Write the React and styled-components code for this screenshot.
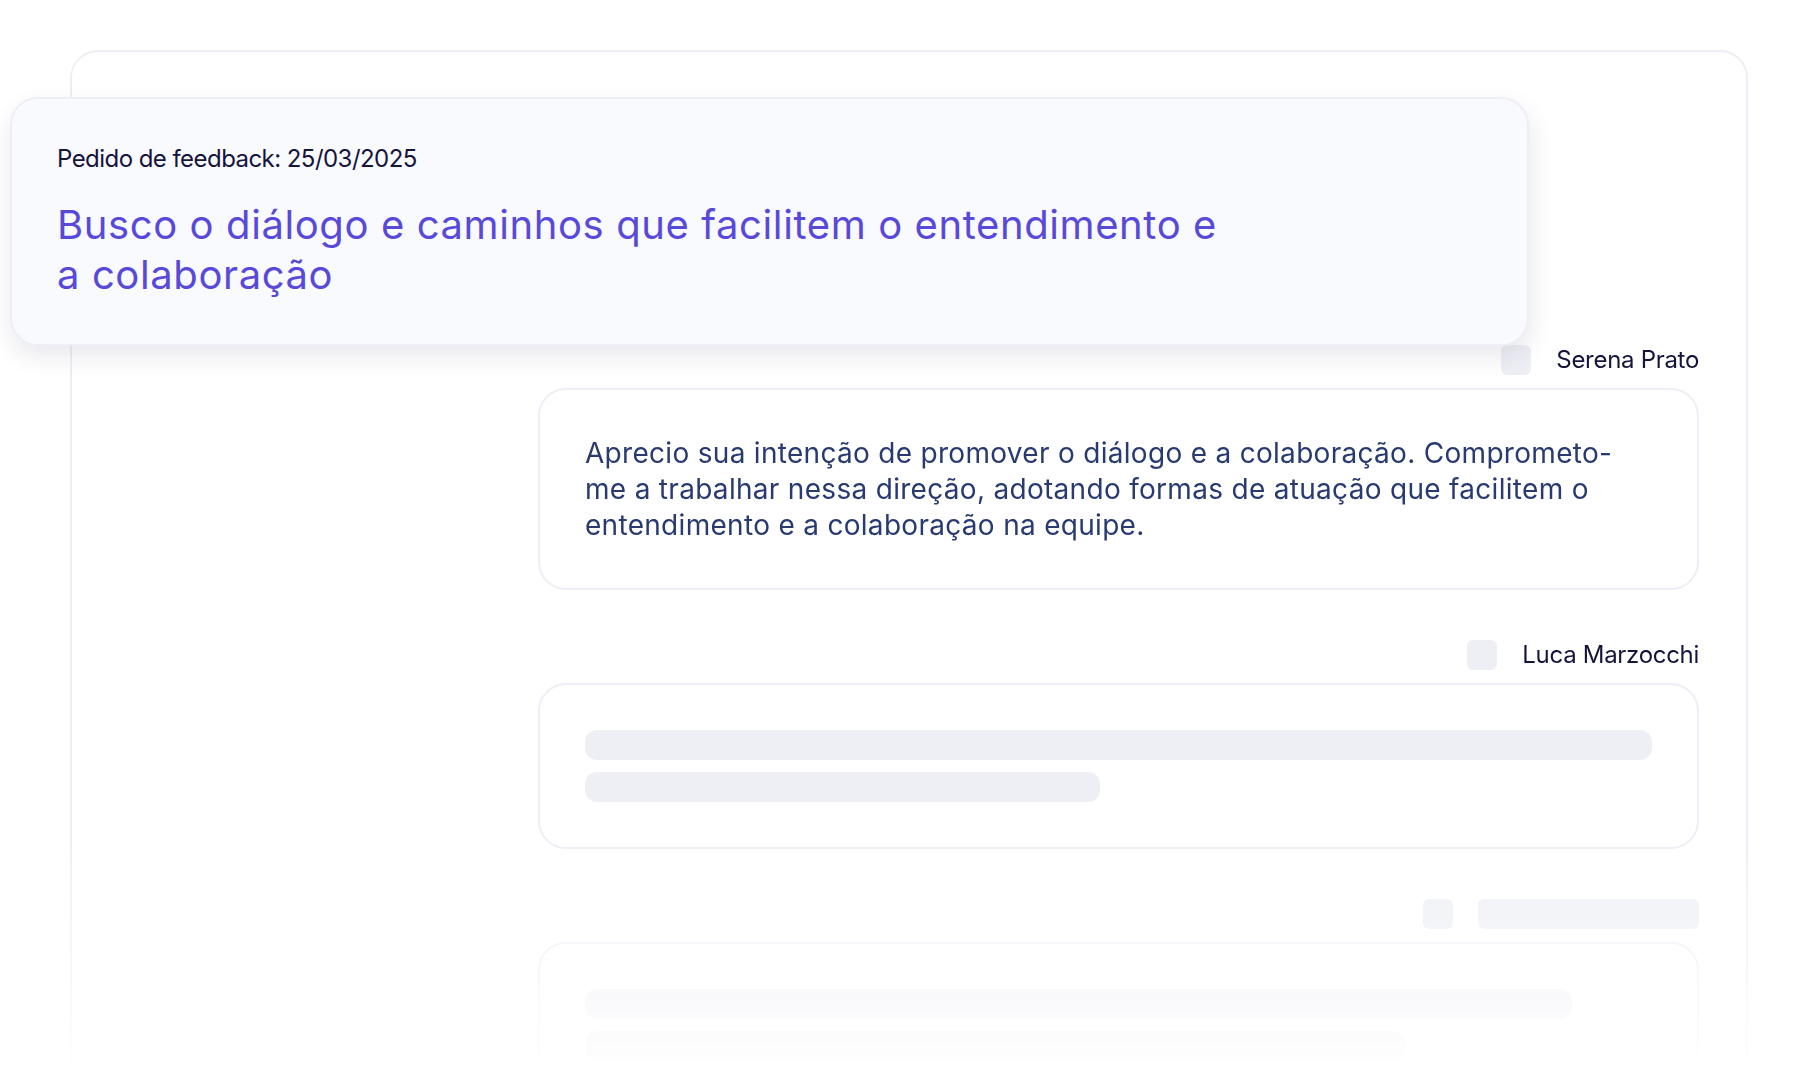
import React from "react";
import styled, { createGlobalStyle } from "styled-components";

const GlobalStyle = createGlobalStyle`
  html, body {
    margin: 0;
    padding: 0;
    background: #ffffff;
  }
  body {
    font-family: Inter, "Noto Sans", "Liberation Sans", sans-serif;
    -webkit-font-smoothing: antialiased;
  }
`;

const Stage = styled.div`
  position: relative;
  height: 1080px;
  overflow: hidden;
  background: #ffffff;
`;

/* Everything below ~840px dissolves into the white page */
const Fade = styled.div`
  height: 100%;
  padding-top: 50px;
  box-sizing: border-box;
  -webkit-mask-image: linear-gradient(to bottom, #000 840px, transparent 1080px);
  mask-image: linear-gradient(to bottom, #000 840px, transparent 1080px);
`;

const Panel = styled.section`
  margin-left: 70px;
  width: 1678px;
  min-height: 1100px;
  box-sizing: border-box;
  border: 2px solid #eeeff6;
  border-radius: 28px;
  background: #ffffff;
  padding: 293px 47px 0 0;
  display: flex;
  justify-content: flex-end;
`;

const RequestCard = styled.header`
  position: absolute;
  top: 97px;
  left: 10px;
  z-index: 2;
  width: 1519px;
  box-sizing: border-box;
  padding: 44px 45px;
  background: #f9fafe;
  border: 2px solid #eeeff6;
  border-radius: 28px;
  box-shadow: 2px 10px 24px rgba(28, 30, 70, 0.1);
`;

const RequestDate = styled.p`
  margin: 0;
  font-size: 24px;
  line-height: 32px;
  letter-spacing: -0.55px;
  color: #15143d;
`;

const RequestTitle = styled.h1`
  margin: 25px 0 0;
  max-width: 1175px;
  font-size: 40px;
  line-height: 50px;
  font-weight: 400;
  letter-spacing: 0.6px;
  color: #5849da;
`;

const Thread = styled.div`
  width: 1161px;
  display: flex;
  flex-direction: column;
  gap: 50px;
`;

const Reply = styled.article`
  display: flex;
  flex-direction: column;
  gap: 13px;
`;

const Author = styled.div`
  display: flex;
  align-items: center;
  justify-content: flex-end;
  gap: 25px;
  height: 30px;
`;

const Avatar = styled.span`
  width: 30px;
  height: 30px;
  border-radius: 6px;
  background: #eeeff5;
  flex: none;
`;

const AuthorName = styled.span`
  font-size: 24px;
  line-height: 30px;
  color: #15143d;
  letter-spacing: -0.3px;
`;

const NamePlaceholder = styled.span`
  width: 221px;
  height: 30px;
  border-radius: 6px;
  background: #eeeff5;
`;

const Bubble = styled.div`
  box-sizing: border-box;
  border: 2px solid #eeeff6;
  border-radius: 28px;
  background: #ffffff;
  padding: 45px;
  display: flex;
  flex-direction: column;
  gap: 12px;
`;

const Message = styled.p`
  margin: 0;
  font-size: 28px;
  line-height: 36px;
  color: #283a70;
  letter-spacing: 0.3px;
`;

const SkeletonLine = styled.div`
  height: 30px;
  border-radius: 12px;
  background: #eeeff5;
  width: ${(p) => p.$w};
`;

const replies = [
  {
    name: "Serena Prato",
    text:
      "Aprecio sua intenção de promover o diálogo e a colaboração. Comprometo-me a trabalhar nessa direção, adotando formas de atuação que facilitem o entendimento e a colaboração na equipe.",
  },
  { name: "Luca Marzocchi", lines: ["100%", "515px"] },
  { name: null, lines: ["987px", "820px"] },
];

export default function App() {
  return (
    <>
      <GlobalStyle />
      <Stage>
        <RequestCard>
          <RequestDate>Pedido de feedback: 25/03/2025</RequestDate>
          <RequestTitle>
            Busco o diálogo e caminhos que facilitem o entendimento e a colaboração
          </RequestTitle>
        </RequestCard>
        <Fade>
          <Panel>
            <Thread>
              {replies.map((r, i) => (
                <Reply key={i}>
                  <Author>
                    <Avatar />
                    {r.name ? <AuthorName>{r.name}</AuthorName> : <NamePlaceholder />}
                  </Author>
                  <Bubble>
                    {r.text ? (
                      <Message>{r.text}</Message>
                    ) : (
                      r.lines.map((w, j) => <SkeletonLine key={j} $w={w} />)
                    )}
                  </Bubble>
                </Reply>
              ))}
            </Thread>
          </Panel>
        </Fade>
      </Stage>
    </>
  );
}
